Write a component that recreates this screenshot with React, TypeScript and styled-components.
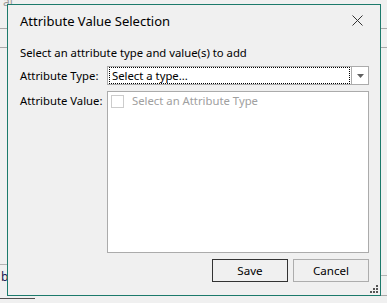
import React from "react";
import styled, { createGlobalStyle } from "styled-components";

const Global = createGlobalStyle`
  html, body { margin: 0; padding: 0; background: #f0f0f0; }
  body { font-family: "Noto Sans", "Segoe UI", sans-serif; }
  * { box-sizing: border-box; }
`;

const Backdrop = styled.div`
  position: relative;
  width: 387px;
  height: 303px;
  overflow: hidden;
  background: #f0f0f0;
  display: flex;
  flex-direction: column;
`;

const BgHeader = styled.div`
  height: 33px;
  border-bottom: 1px solid #a8a8a8;
  font-size: 12px;
  color: #9a9a9a;
  line-height: 12px;
  margin-top: -4px;
  padding-left: 0;
`;

const BgSubHeader = styled.div`
  height: 19px;
  border-bottom: 1px solid #a8a8a8;
`;

const BgSpacer = styled.div`
  flex: 1;
`;

const BgFooter = styled.div`
  height: 39px;
  display: flex;
  align-items: flex-start;
`;

const BgFooterLeft = styled.div`
  width: 40px;
  height: 39px;
  border-top: 1px solid #b4b4b4;
  display: flex;
  flex-direction: column;
`;

const BgLetter = styled.div`
  font-size: 12px;
  line-height: 12px;
  color: #1a1a50;
  padding: 6px 0 0 1px;
  height: 34px;
  border-bottom: 1px solid #505050;
  width: 35px;
`;

const BgFooterRight = styled.div`
  flex: 1;
  margin-top: 11px;
  height: 22px;
  border-top: 1px solid #b4b4b4;
  display: flex;
  justify-content: flex-end;
  align-items: flex-end;
`;

const BgButtonEdge = styled.div<{ $w: number }>`
  width: ${(p) => p.$w}px;
  height: 2px;
  border-top: 1px solid #a8a8a8;
  margin-right: ${(p) => (p.$w > 20 ? 25 : 0)}px;
`;

const Dialog = styled.div`
  position: absolute;
  left: 7px;
  top: 4px;
  width: 374px;
  height: 292px;
  border: 1px solid #1c7a6b;
  background: #f0f0f0;
  display: flex;
  flex-direction: column;
  color: #000;
`;

const TitleBar = styled.div`
  height: 31px;
  display: flex;
  align-items: center;
  justify-content: space-between;
  padding: 0 12px 0 12px;
`;

const Title = styled.div`
  font-size: 13px;
  color: #000;
  padding-top: 1px;
  white-space: nowrap;
`;

const CloseButton = styled.div`
  width: 12px;
  height: 12px;
  display: flex;
  align-items: center;
  justify-content: center;
  margin-right: 5px;
`;

const Body = styled.div`
  flex: 1;
  padding: 0 11px 0 12px;
  display: flex;
  flex-direction: column;
  font-size: 11.3px;
  white-space: nowrap;
`;

const Instruction = styled.div`
  margin-top: 9px;
  line-height: 16px;
  height: 16px;
`;

const FieldRow = styled.div<{ $top: number }>`
  display: grid;
  grid-template-columns: 87px 1fr;
  margin-top: ${(p) => p.$top}px;
  align-items: start;
`;

const Label = styled.div<{ $pad: number }>`
  line-height: 16px;
  padding-top: ${(p) => p.$pad}px;
`;

const Combo = styled.div`
  height: 19px;
  border: 1px solid #ababab;
  background: #fff;
  display: flex;
`;

const ComboText = styled.div`
  flex: 1;
  margin: 0 1px 0 1px;
  border: 1px dotted #000;
  line-height: 15px;
  padding-left: 2px;
`;

const ComboArrow = styled.div`
  width: 17px;
  border-left: 1px solid #ababab;
  display: flex;
  align-items: center;
  justify-content: center;
`;

const ListBox = styled.div`
  height: 162px;
  border: 1px solid #ababab;
  background: #fff;
  padding: 2px 0 0 3px;
`;

const CheckItem = styled.div`
  display: flex;
  align-items: center;
  gap: 8px;
  color: #a0a0a0;
  line-height: 14px;
`;

const CheckBox = styled.div`
  width: 13px;
  height: 13px;
  border: 1px solid #cccccc;
  background: #fff;
`;

const ButtonRow = styled.div`
  display: flex;
  justify-content: flex-end;
  gap: 5px;
  margin-top: 6px;
`;

const Button = styled.div<{ $default?: boolean }>`
  width: 76px;
  height: 23px;
  border: 1px solid ${(p) => (p.$default ? "#333333" : "#adadad")};
  background: #f0f0f0;
  display: flex;
  align-items: center;
  justify-content: center;
  font-size: 11.6px;
`;

const Grip = styled.svg`
  position: absolute;
  right: 2px;
  bottom: 2px;
`;

export default function App() {
  return (
    <>
      <Global />
      <Backdrop>
        <BgHeader>&nbsp;ai</BgHeader>
        <BgSubHeader />
        <BgSpacer />
        <BgFooter>
          <BgFooterLeft>
            <BgLetter>b</BgLetter>
          </BgFooterLeft>
          <BgFooterRight>
            <BgButtonEdge $w={75} />
            <BgButtonEdge $w={7} />
          </BgFooterRight>
        </BgFooter>
        <Dialog>
          <TitleBar>
            <Title>Attribute Value Selection</Title>
            <CloseButton>
              <svg width="11" height="11" viewBox="0 0 11 11">
                <path d="M0.5 0.5 L10.5 10.5 M10.5 0.5 L0.5 10.5" stroke="#333" strokeWidth="1" fill="none" />
              </svg>
            </CloseButton>
          </TitleBar>
          <Body>
            <Instruction>Select an attribute type and value(s) to add</Instruction>
            <FieldRow $top={5}>
              <Label $pad={2}>Attribute Type:</Label>
              <Combo>
                <ComboText>Select a type...</ComboText>
                <ComboArrow>
                  <svg width="7" height="4" viewBox="0 0 7 4">
                    <path d="M0 0 H7 L3.5 4 Z" fill="#606060" />
                  </svg>
                </ComboArrow>
              </Combo>
            </FieldRow>
            <FieldRow $top={6}>
              <Label $pad={2}>Attribute Value:</Label>
              <ListBox>
                <CheckItem>
                  <CheckBox />
                  <span>Select an Attribute Type</span>
                </CheckItem>
              </ListBox>
            </FieldRow>
            <ButtonRow>
              <Button $default>Save</Button>
              <Button>Cancel</Button>
            </ButtonRow>
          </Body>
          <Grip width="8" height="8" viewBox="0 0 8 8">
            <rect x="6" y="0" width="2" height="2" fill="#555" />
            <rect x="3" y="3" width="2" height="2" fill="#555" />
            <rect x="6" y="3" width="2" height="2" fill="#555" />
            <rect x="0" y="6" width="2" height="2" fill="#555" />
            <rect x="3" y="6" width="2" height="2" fill="#555" />
            <rect x="6" y="6" width="2" height="2" fill="#555" />
          </Grip>
        </Dialog>
      </Backdrop>
    </>
  );
}
